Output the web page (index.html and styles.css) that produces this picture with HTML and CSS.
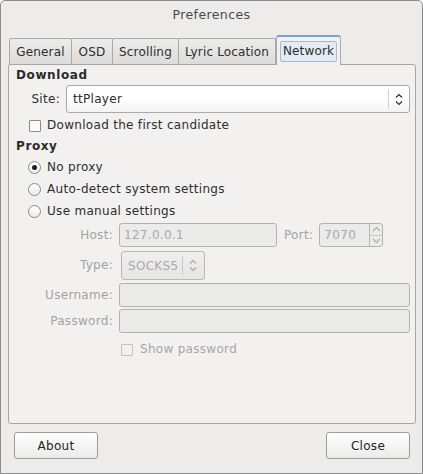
FILE: index.html
```html
<!DOCTYPE html>
<html>
<head>
<meta charset="utf-8">
<link rel="stylesheet" href="styles.css">
</head>
<body>
<div class="window">
  <div class="titlebar">Preferences</div>
  <div class="tabbar">
    <div class="tab t-general">General</div>
    <div class="tab t-osd">OSD</div>
    <div class="tab t-scroll">Scrolling</div>
    <div class="tab t-lyric">Lyric Location</div>
    <div class="tab active"><span class="tab-focus">Network</span></div>
  </div>
  <div class="pane">
    <div class="heading">Download</div>
    <div class="site-row">
      <span class="site-label">Site:</span>
      <div class="combo site-combo">
        <span class="combo-text">ttPlayer</span>
        <span class="combo-sep"></span>
        <svg class="updown" width="8" height="13" viewBox="0 0 8 13"><path d="M1 4.5 L4 1.5 L7 4.5 M1 8.5 L4 11.5 L7 8.5" fill="none" stroke="#2e2e2e" stroke-width="1.2"/></svg>
      </div>
    </div>
    <div class="check-row">
      <span class="checkbox"></span>
      <span>Download the first candidate</span>
    </div>
    <div class="heading proxy">Proxy</div>
    <div class="radio-row"><span class="radio checked"></span><span>No proxy</span></div>
    <div class="radio-row"><span class="radio"></span><span>Auto-detect system settings</span></div>
    <div class="radio-row"><span class="radio"></span><span>Use manual settings</span></div>
    <div class="manual">
      <span class="flabel">Host:</span>
      <div class="host-line">
        <div class="field host-field">127.0.0.1</div>
        <span class="port-label">Port:</span>
        <div class="spin">
          <span class="spin-text">7070</span>
          <div class="spin-btns">
            <span class="spin-btn up"><svg width="9" height="6" viewBox="0 0 9 6"><path d="M1 5 L4.5 1.5 L8 5" fill="none" stroke="#a9a9a9" stroke-width="1.1"/></svg></span>
            <span class="spin-btn down"><svg width="9" height="6" viewBox="0 0 9 6"><path d="M1 1 L4.5 4.5 L8 1" fill="none" stroke="#a9a9a9" stroke-width="1.1"/></svg></span>
          </div>
        </div>
      </div>
      <span class="flabel">Type:</span>
      <div class="type-line">
        <div class="combo type-combo">
          <span class="combo-text">SOCKS5</span>
          <span class="combo-sep"></span>
          <svg class="updown" width="8" height="13" viewBox="0 0 8 13"><path d="M1 4.5 L4 1.5 L7 4.5 M1 8.5 L4 11.5 L7 8.5" fill="none" stroke="#a9a9a9" stroke-width="1.2"/></svg>
        </div>
      </div>
      <span class="flabel">Username:</span>
      <div class="field wide"></div>
      <span class="flabel pw">Password:</span>
      <div class="field wide pw"></div>
      <span></span>
      <div class="show-row"><span class="checkbox dis"></span><span>Show password</span></div>
    </div>
  </div>
  <div class="buttons">
    <button class="btn">About</button>
    <button class="btn">Close</button>
  </div>
</div>
</body>
</html>
```
FILE: styles.css
```css
* { box-sizing: border-box; }
html, body { margin: 0; padding: 0; background: #ffffff; }
body {
  font-family: "DejaVu Sans", sans-serif;
  font-size: 12px;
  letter-spacing: 0.3px;
  color: #2e2e2e;
}
.window {
  width: 423px;
  height: 474px;
  border: 1px solid #8d8d8d;
  border-radius: 5px 5px 0 0;
  background: #edeceb;
  display: flex;
  flex-direction: column;
}
.titlebar {
  height: 34px;
  padding-top: 6px;
  line-height: 16px;
  text-align: center;
  font-size: 12.5px;
  letter-spacing: 0.4px;
  color: #4a4a4a;
}
.tabbar {
  height: 30px;
  display: flex;
  align-items: flex-end;
  padding-left: 8px;
  margin-bottom: -1px;
}
.tab {
  height: 27px;
  border: 1px solid #a9a9a9;
  border-bottom: none;
  margin-left: -1px;
  padding: 0;
  text-align: center;
  line-height: 26px;
  letter-spacing: 0.15px;
  background: linear-gradient(#ececeb, #dcdbda);
  color: #2e2e2e;
  border-radius: 2px 2px 0 0;
}
.tab:first-child { margin-left: 0; }
.t-general { width: 63px; }
.t-osd { width: 42px; }
.t-scroll { width: 67px; }
.t-lyric { width: 98px; }
.tab.active {
  position: relative;
  z-index: 1;
  width: 65px;
  height: 30px;
  margin-left: 0;
  padding: 4px 3px 0 3px;
  line-height: normal;
  background: #f2f1f0;
  border-color: #a9a9a9;
  border-top: 2px solid #7f9fce;
  border-radius: 3px 3px 0 0;
}
.tab-focus {
  display: block;
  height: 21px;
  line-height: 19px;
  padding: 0;
  text-align: center;
  border: 1px solid #a7b9d3;
  border-radius: 2px;
  background: #e4ebf4;
}
.pane {
  height: 360px;
  margin: 0 6px 0 7px;
  border: 1px solid #a6a6a6;
  border-radius: 2px 3px 3px 3px;
  background: #f2f1f0;
  padding: 0 5px 0 7px;
}
.heading {
  height: 20px;
  line-height: 20px;
  font-weight: bold;
  letter-spacing: 0.6px;
  color: #2a2a2a;
}
.heading.proxy { height: 19px; line-height: 19px; }
.site-row {
  display: flex;
  align-items: center;
  height: 28px;
  gap: 6px;
}
.site-label {
  width: 44px;
  text-align: right;
}
.combo {
  height: 28px;
  border: 1px solid #a9a9a9;
  border-radius: 3px;
  display: flex;
  align-items: center;
}
.site-combo {
  flex: 1;
  background: linear-gradient(#ffffff 45%, #f3f3f3);
}
.combo-text {
  flex: 1;
  padding-left: 6px;
}
.combo-sep {
  width: 1px;
  align-self: stretch;
  margin: 3px 0;
  background: #cfcfcf;
}
.updown {
  margin: 0 6px 0 6px;
}
.check-row {
  display: flex;
  align-items: center;
  height: 24px;
  padding-left: 13px;
}
.checkbox {
  width: 12px;
  height: 12px;
  border: 1px solid #8b8b8b;
  border-radius: 1px;
  background: #fbfbfb;
  margin-right: 6px;
  margin-top: 2px;
}
.radio-row {
  display: flex;
  align-items: center;
  height: 22px;
  padding-left: 12px;
}
.radio {
  width: 13px;
  height: 13px;
  border: 1px solid #8a8a8a;
  border-radius: 50%;
  background: linear-gradient(#ffffff, #ececec);
  margin-right: 6px;
  display: flex;
  align-items: center;
  justify-content: center;
}
.radio.checked::after {
  content: "";
  width: 5px;
  height: 5px;
  border-radius: 50%;
  background: #1f1f1f;
}
.manual {
  margin-top: 1px;
  display: grid;
  grid-template-columns: 97px 1fr;
  column-gap: 6px;
  row-gap: 4px;
  align-items: center;
}
.flabel {
  text-align: right;
  color: #a3a3a3;
}
.flabel.pw, .field.pw { margin-top: -2px; }
.host-line {
  display: flex;
  align-items: center;
  height: 24px;
}
.field {
  height: 24px;
  border: 1px solid #b2b2b2;
  border-radius: 3px;
  background: #ebebea;
  color: #a9a9a9;
  line-height: 22px;
  padding-left: 4px;
}
.host-field { width: 158px; }
.port-label {
  color: #a3a3a3;
  margin: 0 6px 0 7px;
}
.spin {
  width: 64px;
  height: 24px;
  border: 1px solid #b2b2b2;
  border-radius: 3px;
  background: #ebebea;
  display: flex;
}
.spin-text {
  flex: 1;
  padding-left: 4px;
  line-height: 22px;
  color: #a9a9a9;
}
.spin-btns {
  width: 13px;
  border-left: 1px solid #b8b8b8;
  display: flex;
  flex-direction: column;
}
.spin-btn {
  flex: 1;
  display: flex;
  align-items: center;
  justify-content: center;
}
.spin-btn.up { border-bottom: 1px solid #c4c4c4; }
.type-line {
  height: 28px;
  display: flex;
  padding-left: 2px;
}
.type-combo {
  width: 84px;
  height: 29px;
  border-color: #b8b8b8;
  background: linear-gradient(#f0efee, #e6e5e4);
  color: #a9a9a9;
}
.type-combo .combo-text { padding-left: 6px; }
.type-combo .combo-sep { margin: 4px 0; background: #c8c8c8; }
.type-combo .updown { margin: 0 7px 0 6px; }
.field.wide { width: 100%; }
.show-row {
  height: 24px;
  display: flex;
  align-items: center;
  padding-left: 2px;
  color: #a6a6a6;
}
.checkbox.dis {
  border-color: #c2c2c2;
  background: #f1f1f1;
  margin-right: 7px;
}
.buttons {
  display: flex;
  justify-content: space-between;
  margin-top: 8px;
  padding: 0 12px 0 13px;
}
.btn {
  width: 84px;
  height: 27px;
  border: 1px solid #9d9d9d;
  border-radius: 3px;
  background: linear-gradient(#fefefe, #ebebea);
  font-family: "DejaVu Sans", sans-serif;
  font-size: 12px;
  letter-spacing: 0.3px;
  color: #1e1e1e;
  padding: 0;
}
```
